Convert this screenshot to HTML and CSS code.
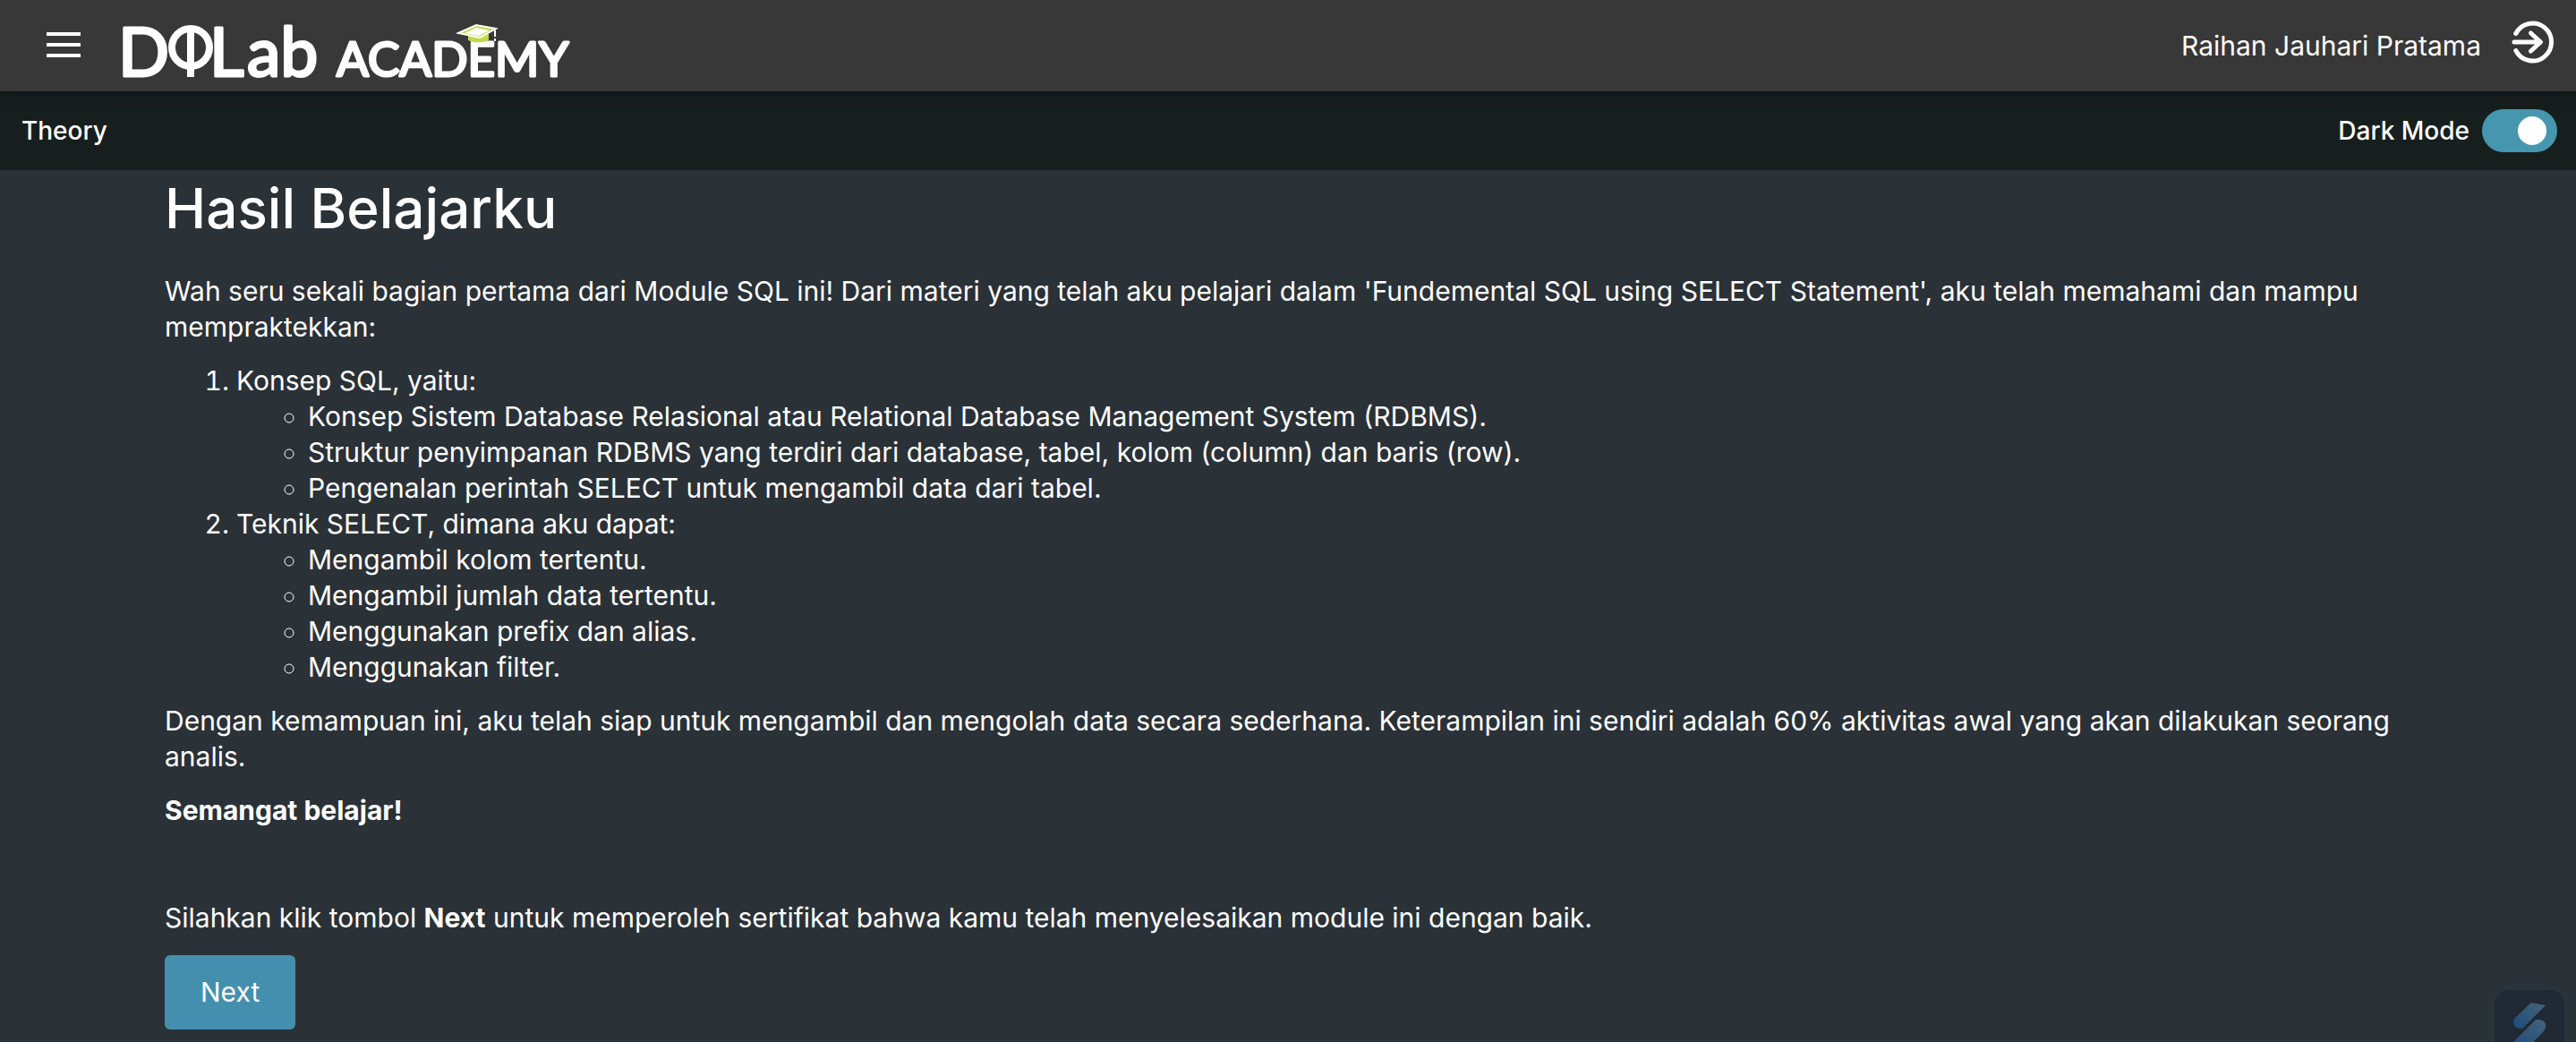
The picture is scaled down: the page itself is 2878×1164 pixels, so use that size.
FILE: index.html
```html
<!DOCTYPE html>
<html lang="id">
<head>
<meta charset="utf-8">
<meta name="viewport" content="width=device-width, initial-scale=1">
<title>Hasil Belajarku</title>
<link rel="stylesheet" href="styles.css">
</head>
<body>
<header class="topbar">
  <button class="menu" type="button" aria-label="Menu"><span></span><span></span><span></span></button>
  <a class="logo" href="#" aria-label="DQLab Academy">
    <svg width="504" height="76" viewBox="0 0 504 76">
      <g class="logo-large">
        <text x="-6" y="74">D</text>
        <text x="96" y="74">L</text>
        <text x="138" y="74">ab</text>
      </g>
      <g class="logo-mark">
        <circle cx="75" cy="42" r="21"/>
        <path d="M75 20V75"/>
      </g>
      <text class="logo-small" x="238" y="74">ACADEMY</text>
      <path class="cap-base" d="M385 27v7q11 5 23 0v-7z"/>
      <path class="cap-board" d="M374 26l20-9 22 4-18 10z"/>
      <path class="cap-top" d="M381 26l13-6 15 3-12 6z"/>
      <path class="cap-tassel" d="M415 21v14"/>
    </svg>
  </a>
  <span class="user">Raihan Jauhari Pratama</span>
  <button class="logout" type="button" aria-label="Logout">
    <svg width="48" height="48" viewBox="0 0 48 48">
      <path d="M4.800 14.500A21 21 0 1 1 4.800 33.500M3 24H32M21.500 14L32.500 24L21.500 34"/>
    </svg>
  </button>
</header>
<div class="subbar">
  <span>Theory</span>
  <label class="mode">Dark Mode <input type="checkbox" role="switch" checked></label>
</div>
<main class="content">
  <h1>Hasil Belajarku</h1>
  <p>Wah seru sekali bagian pertama dari Module SQL ini! Dari materi yang telah aku pelajari dalam 'Fundemental SQL using SELECT Statement', aku telah memahami dan mampu mempraktekkan:</p>
  <ol>
    <li>Konsep SQL, yaitu:
      <ul>
        <li>Konsep Sistem Database Relasional atau Relational Database Management System (RDBMS).</li>
        <li>Struktur penyimpanan RDBMS yang terdiri dari database, tabel, kolom (column) dan baris (row).</li>
        <li>Pengenalan perintah SELECT untuk mengambil data dari tabel.</li>
      </ul>
    </li>
    <li>Teknik SELECT, dimana aku dapat:
      <ul>
        <li>Mengambil kolom tertentu.</li>
        <li>Mengambil jumlah data tertentu.</li>
        <li>Menggunakan prefix dan alias.</li>
        <li>Menggunakan filter.</li>
      </ul>
    </li>
  </ol>
  <p>Dengan kemampuan ini, aku telah siap untuk mengambil dan mengolah data secara sederhana. Keterampilan ini sendiri adalah 60% aktivitas awal yang akan dilakukan seorang analis.</p>
  <p><strong>Semangat belajar!</strong></p>
  <p><br></p>
  <p>Silahkan klik tombol <strong>Next</strong> untuk memperoleh sertifikat bahwa kamu telah menyelesaikan module ini dengan baik.</p>
  <button class="next" type="button">Next</button>
</main>
<button class="widget" type="button" aria-label="Bantuan">
  <svg width="78" height="78" viewBox="0 0 78 78">
    <defs>
      <linearGradient id="blade" x1="1" y1="0" x2="0" y2="1">
        <stop offset="0" stop-color="#46647b"/>
        <stop offset="1" stop-color="#1d4b7c"/>
      </linearGradient>
    </defs>
    <path fill="url(#blade)" d="M41 14L57 17L31 43Q21 44 21 35Q21 33 24 30z"/>
    <path fill="url(#blade)" d="M46 33Q58 32 57 41Q57 44 54 47L37 64L21 61L20 59z"/>
  </svg>
</button>
</body>
</html>
```
FILE: styles.css
```css
* {
  box-sizing: border-box;
}

body {
  margin: 0;
  min-height: 100vh;
  background: #2a3137;
  color: #fff;
  font: 400 30px/40px Inter, "Noto Sans", sans-serif;
}

button {
  padding: 0;
  border: 0;
  background: none;
  color: inherit;
  font: inherit;
  cursor: pointer;
}

svg {
  display: block;
  overflow: visible;
}

.topbar {
  position: relative;
  display: flex;
  align-items: center;
  height: 102px;
  padding: 0 24px 0 52px;
  background: #383838;
  box-shadow: 0 2px 12px rgba(0, 0, 0, 0.5);
}

.menu {
  display: grid;
  gap: 8px;
  width: 38px;
  margin: 0 48px 2px 0;
}

.menu span {
  height: 4px;
  background: #fff;
}

.logo {
  margin-bottom: 4px;
}

.logo text {
  fill: #fff;
  stroke: #fff;
  stroke-width: 3;
  stroke-linejoin: round;
  font-family: Lato, sans-serif;
}

.logo-large {
  font-size: 75px;
}

.logo-small {
  font-size: 53px;
}

.logo-mark {
  fill: none;
  stroke: #fff;
  stroke-width: 8;
}

.cap-base {
  fill: #c3d84a;
}

.cap-board {
  fill: #c3d84a;
  stroke: #fff;
  stroke-width: 2;
}

.cap-top {
  fill: #fff;
}

.cap-tassel {
  fill: none;
  stroke: #fff;
  stroke-width: 2;
  stroke-dasharray: 9 2 3;
}

.user {
  margin-left: auto;
}

.logout {
  margin: 0 0 8px 34px;
}

.logout path {
  fill: none;
  stroke: #fff;
  stroke-width: 5;
  stroke-linecap: round;
  stroke-linejoin: round;
}

.subbar {
  display: flex;
  align-items: center;
  justify-content: space-between;
  height: 88px;
  padding: 0 21px 0 24px;
  background: #171f1e;
  font-size: 28px;
  font-weight: 500;
}

.mode {
  display: flex;
  align-items: center;
  gap: 14px;
}

.mode input {
  appearance: none;
  display: flex;
  justify-content: flex-end;
  width: 84px;
  height: 48px;
  margin: 0;
  padding: 8px 12px;
  border-radius: 24px;
  background: #4796af;
}

.mode input::before {
  content: "";
  width: 32px;
  height: 32px;
  border-radius: 50%;
  background: #fff;
}

.content {
  padding: 10px 184px 14px;
}

h1 {
  margin: 0 0 39px;
  font-size: 62px;
  font-weight: 500;
  line-height: 66px;
}

p,
ol {
  margin: 0 0 20px;
}

ol,
ul {
  padding-left: 80px;
}

ul {
  margin: 0;
}

.next {
  padding: 20px 40px;
  margin-top: 2px;
  border-radius: 6px;
  background: #458fae;
  line-height: 43px;
}

.widget {
  position: fixed;
  right: 7px;
  bottom: -26px;
  border: 6px solid #28343a;
  border-radius: 22px;
  background: #202934;
}
```
